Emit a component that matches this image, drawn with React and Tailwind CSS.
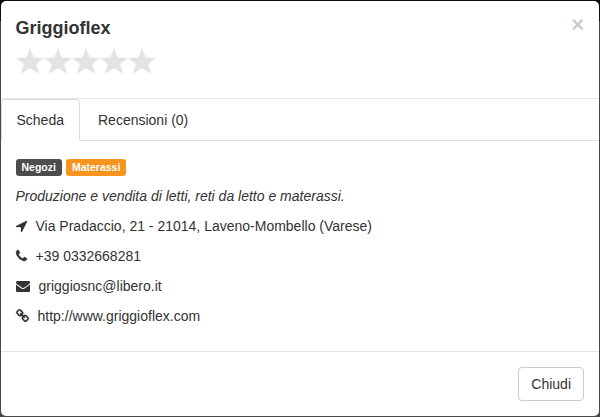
import React from 'react';

const ICONS = {
  arrow: {
    box: '192 0 1408 1792',
    size: 'w-[11px]',
    d: 'M1593 349l-640 1280q-17 35-57 35-5 0-15-2-22-5-35.5-22.5t-13.5-39.5v-576h-576q-22 0-39.5-13.5t-22.5-35.5 4-42 29-30l1280-640q13-7 29-7 27 0 45 19 15 14 18.5 34.5t-6.5 39.5z',
  },
  phone: {
    box: '192 0 1408 1792',
    size: 'w-[11px]',
    d: 'M1600 1240q0 27-10 70.5t-21 68.5q-21 50-122 106-94 51-186 51-27 0-52.5-3.5t-57.5-12.5-47.5-14.5-55.5-20.5-49-18q-98-35-175-83-128-79-264.5-215.5t-215.5-264.5q-48-77-83-175-3-9-18-49t-20.5-55.5-14.5-47.5-12.5-57.5-3.5-52.5q0-92 51-186 56-101 106-122 25-11 68.5-21t70.5-10q14 0 21 3 18 6 53 76 11 19 30 54t35 63.5 31 53.5q3 4 17.5 25t21.5 35.5 7 28.5q0 20-28.5 50t-62 55-62 53-28.5 46q0 9 5 22.5t8.5 20.5 14 24 11.5 19q76 137 174 235t235 174q2 1 19 11.5t24 14 20.5 8.5 22.5 5q18 0 46-28.5t53-62 55-62 50-28.5q14 0 28.5 7t35.5 21.5 25 17.5q25 15 53.5 31t63.5 35 54 30q70 35 76 53 3 7 3 21z',
  },
  mail: {
    box: '0 0 1792 1792',
    size: 'w-[14px]',
    d: 'M1792 710v794q0 66-47 113t-113 47h-1472q-66 0-113-47t-47-113v-794q44 49 101 87 362 246 497 345 57 42 92.5 65.5t94.5 48 110 24.5h2q51 0 110-24.5t94.5-48 92.5-65.5q170-123 498-345 57-39 100-87zm0-294q0 79-49 151t-122 123q-376 261-468 325-10 7-42.5 31t-54 38.5-52 32.5-57.5 27-50 9h-2q-23 0-50-9t-57.5-27-52-32.5-54-38.5-42.5-31q-91-64-262-182.5t-205-142.5q-62-42-117-115.5t-55-136.5q0-78 41.5-130t118.5-52h1472q65 0 112.5 47t47.5 113z',
  },
  link: {
    box: '64 0 1664 1792',
    size: 'w-[13px]',
    d: 'M1520 1216q0-40-28-68l-208-208q-28-28-68-28-42 0-72 32 3 3 19 18.5t21.5 21.5 15 19 13 25.5 3.5 27.5q0 40-28 68t-68 28q-15 0-27.5-3.5t-25.5-13-19-15-21.5-21.5-18.5-19q-33 31-33 73 0 40 28 68l206 207q27 27 68 27 40 0 68-26l147-146q28-28 28-67zm-703-705q0-40-28-68l-206-207q-28-28-68-28-39 0-68 27l-147 146q-28 28-28 67 0 40 28 68l208 208q27 27 68 27 42 0 72-31-3-3-19-18.5t-21.5-21.5-15-19-13-25.5-3.5-27.5q0-40 28-68t68-28q15 0 27.5 3.5t25.5 13 19 15 21.5 21.5 18.5 19q33-31 33-73zm895 705q0 120-85 203l-147 146q-83 83-203 83-121 0-204-85l-206-207q-83-83-83-203 0-123 88-209l-88-88q-86 88-208 88-120 0-204-84l-208-208q-84-84-84-204t85-203l147-146q83-83 203-83 121 0 204 85l206 207q83 83 83 203 0 123-88 209l88 88q86-88 208-88 120 0 204 84l208 208q84 84 84 204z',
  },
};

const CONTACTS = [
  ['arrow', 'Via Pradaccio, 21 - 21014, Laveno-Mombello (Varese)'],
  ['phone', '+39 0332668281'],
  ['mail', 'griggiosnc@libero.it'],
  ['link', 'http://www.griggioflex.com'],
];

function Star() {
  return (
    <svg viewBox="0 0 28 26" className="h-[26px] w-7" fill="#e3e3e3">
      <path d="M14 0L17.6 9.4L28 9.9L20 16.1L23 25.6L14 20.2L5 25.6L8 16.1L0 9.9L10.4 9.4Z" />
    </svg>
  );
}

function ContactRow({ icon, text }) {
  const { box, size, d } = ICONS[icon];
  return (
    <p className="mb-2.5 flex h-5 items-center gap-[9px]">
      <svg
        viewBox={box}
        className={`h-[14px] shrink-0 overflow-visible ${size}`}
        fill="#333333"
        stroke="#333333"
        strokeWidth={icon === 'mail' ? 0 : 40}
      >
        <path d={d} />
      </svg>
      <span>{text}</span>
    </p>
  );
}

export default function App() {
  return (
    <div className="h-[417px] w-[600px] bg-[linear-gradient(#0b090c_21px,#4a494b_21px)] p-px font-['Liberation_Sans',Arial,sans-serif] text-sm leading-5 text-[#333333]">
      <div className="flex h-full flex-col rounded-[5px] bg-white">
        <header className="flex h-[98px] shrink-0 justify-between border-b border-[#e5e5e5] pt-[15px] pr-[15px] pl-[14.5px]">
          <div>
            <h4 className="h-[26px] text-lg leading-[25px] font-bold">Griggioflex</h4>
            <div className="mt-[6px] flex">
              {[1, 2, 3, 4, 5].map((n) => (
                <Star key={n} />
              ))}
            </div>
          </div>
          <button className="-mt-[2px] h-[21px] text-[22px] leading-[21px] font-bold text-[#cccccc]">×</button>
        </header>
        <nav className="flex h-[42px] shrink-0 border-b border-[#dddddd]">
          <a className="h-[42px] rounded-t border border-b-0 border-[#dddddd] bg-white pt-[10px] pr-[15.5px] pl-[14.5px]">Scheda</a>
          <a className="ml-[2px] px-[15.5px] pt-[11px]">Recensioni (0)</a>
        </nav>
        <main className="h-[210px] shrink-0 px-[14.5px] pt-[14px]">
          <div className="mb-[6px] flex h-[25px] items-center gap-1 text-[10.5px] leading-[17px] font-bold text-white">
            <span className="h-[17px] rounded-[3px] bg-[#4d4d4d] px-[6px]">Negozi</span>
            <span className="h-[17px] rounded-[3px] bg-[#f7941e] px-[6px]">Materassi</span>
          </div>
          <p className="mb-2.5 italic">Produzione e vendita di letti, reti da letto e materassi.</p>
          {CONTACTS.map(([icon, text]) => (
            <ContactRow key={icon} icon={icon} text={text} />
          ))}
        </main>
        <footer className="flex flex-1 items-start justify-end border-t border-[#e5e5e5] p-[15px]">
          <button className="h-[34px] rounded border border-[#cccccc] bg-white px-3">Chiudi</button>
        </footer>
      </div>
    </div>
  );
}
